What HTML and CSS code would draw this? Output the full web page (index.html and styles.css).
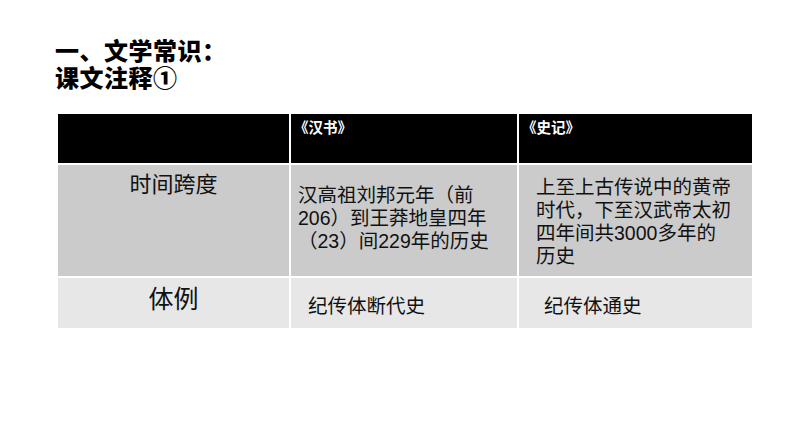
FILE: index.html
```html
<!DOCTYPE html>
<html lang="zh">
<head>
<meta charset="utf-8">
<link rel="stylesheet" href="styles.css">
</head>
<body>
<div class="page">
  <div class="title">
    <div class="tline">一、文学常识：</div>
    <div class="tline">课文注释①</div>
  </div>
  <div class="table">
    <div class="cell head"></div>
    <div class="cell head hl">《汉书》</div>
    <div class="cell head hl">《史记》</div>

    <div class="cell r1 label">时间跨度</div>
    <div class="cell r1 txt c2a">汉高祖刘邦元年（前<br>206）到王莽地皇四年<br>（23）间229年的历史</div>
    <div class="cell r1 txt c3a">上至上古传说中的黄帝<br>时代，下至汉武帝太初<br>四年间共3000多年的<br>历史</div>

    <div class="cell r2 label big">体例</div>
    <div class="cell r2 txt c2b">纪传体断代史</div>
    <div class="cell r2 txt c3b">纪传体通史</div>
  </div>
</div>
</body>
</html>
```
FILE: styles.css
```css
html, body {
  margin: 0;
  padding: 0;
  background: #ffffff;
}
body {
  font-family: "Liberation Sans", "Noto Sans CJK SC", sans-serif;
  color: #111111;
}
.page {
  width: 794px;
  height: 447px;
  padding: 36px 0 0 55px;
  box-sizing: border-box;
}
.title {
  font-family: "Noto Sans CJK SC", sans-serif;
  font-weight: 900;
  font-size: 24px;
  color: #000;
}
.tline {
  height: 27px;
  line-height: 27px;
  white-space: nowrap;
  letter-spacing: 0.5px;
}
.table {
  margin-top: 24px;
  margin-left: 3px;
  display: grid;
  grid-template-columns: 231px 226px 233px;
  grid-template-rows: 49px 111px 50px;
  gap: 2px;
  width: 694px;
}
.cell {
  box-sizing: border-box;
}
.head {
  background: #000000;
}
.hl {
  color: #ffffff;
  font-weight: 700;
  font-size: 14.5px;
  line-height: 17px;
  padding: 4px 0 0 3px;
  font-family: "Noto Sans CJK SC", sans-serif;
}
.r1 {
  background: #cbcbcb;
}
.r2 {
  background: #e7e7e7;
}
.label {
  text-align: center;
  font-size: 22px;
  line-height: 28px;
  padding-top: 6px;
}
.big {
  font-size: 25px;
  line-height: 32px;
  padding-top: 5px;
}
.txt {
  font-size: 19.5px;
  line-height: 23px;
}
.c2a {
  padding: 19px 0 0 7px;
}
.c3a {
  padding: 11px 0 0 17px;
}
.c2b {
  padding: 17px 0 0 17px;
}
.c3b {
  padding: 17px 0 0 25px;
}
```
